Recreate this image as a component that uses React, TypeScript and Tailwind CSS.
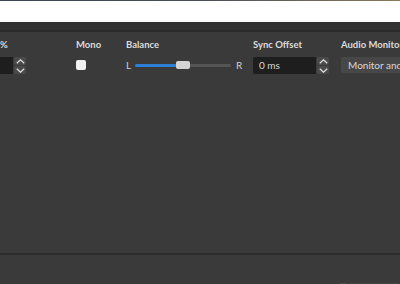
function Spin({ value, width }: { value: string; width: string }) {
    return (
        <div className="flex h-[17px] items-stretch gap-[1px]">
            <div className={`${width} flex items-center bg-[#1e1e1e] pl-[6px] text-[10px] text-[#d8d8d8] rounded-l-[2px]`}>{value}</div>
            <div className="flex w-[12px] flex-col gap-[1px]">
                <div className="flex flex-1 items-center justify-center rounded-[2px] bg-[#4a4a4a]">
                    <svg width="9" height="5" viewBox="0 0 9 5" fill="none" stroke="#e0e0e0" strokeWidth="1.2">
                        <path d="M0.8 4.3 L4.5 0.8 L8.2 4.3" />
                    </svg>
                </div>
                <div className="flex flex-1 items-center justify-center rounded-[2px] bg-[#4a4a4a]">
                    <svg width="9" height="5" viewBox="0 0 9 5" fill="none" stroke="#e0e0e0" strokeWidth="1.2">
                        <path d="M0.8 0.7 L4.5 4.2 L8.2 0.7" />
                    </svg>
                </div>
            </div>
        </div>
    );
}

export default function App() {
    return (
        <div className="flex h-[284px] w-[400px] flex-col overflow-hidden bg-[#3a3a3a]" style={{ fontFamily: 'Lato, "Open Sans", sans-serif' }}>
            {/* top strip */}
            <div className="h-[1px] bg-gradient-to-r from-[#3d4350] via-[#4a4f58] to-[#8a7a5a]" />
            <div className="h-[21px] bg-white" />
            <div className="h-[8px] bg-[#323232]" />
            <div className="h-[2px] bg-[#2a2a2a]" />

            {/* mixer row */}
            <div className="flex h-[221px] pt-[4px]">
                <div className="ml-[-40px] flex w-[66px] shrink-0 flex-col">
                    <div className="h-[18px] pl-[40px] text-[9.5px] font-bold leading-[18px] text-[#dcdcdc]">%</div>
                    <div className="mt-[3px]">
                        <Spin value="" width="w-[53px]" />
                    </div>
                </div>
                <div className="ml-[50px] flex w-[50px] shrink-0 flex-col">
                    <div className="h-[18px] text-[9.5px] font-bold leading-[18px] text-[#dcdcdc]">Mono</div>
                    <div className="mt-[6px] h-[10px] w-[10px] rounded-[2px] bg-[#f2f2f2]" />
                </div>
                <div className="flex w-[127px] shrink-0 flex-col">
                    <div className="h-[18px] text-[9.5px] font-bold leading-[18px] text-[#dcdcdc]">Balance</div>
                    <div className="mt-[3px] flex h-[17px] items-center text-[10px] text-[#cfcfcf]">
                        <span className="w-[9px]">L</span>
                        <div className="relative flex h-[3px] w-[96px] items-center">
                            <div className="h-[3px] w-[42px] rounded-l-full bg-[#2c7fd4]" />
                            <div className="h-[3px] flex-1 rounded-r-full bg-[#555555]" />
                            <div className="absolute left-[41px] top-[-3px] h-[8px] w-[14px] rounded-[2px] bg-[#d4d4d4]" />
                        </div>
                        <span className="ml-[5px]">R</span>
                    </div>
                </div>
                <div className="flex w-[88px] shrink-0 flex-col">
                    <div className="h-[18px] text-[9.5px] font-bold leading-[18px] text-[#dcdcdc]">Sync Offset</div>
                    <div className="mt-[3px]">
                        <Spin value="0 ms" width="w-[63px]" />
                    </div>
                </div>
                <div className="flex shrink-0 flex-col">
                    <div className="h-[18px] whitespace-nowrap text-[9.5px] font-bold leading-[18px] text-[#dcdcdc]">Audio Monitoring</div>
                    <div className="mt-[3px] flex h-[16px] w-[120px] items-center rounded-[2px] bg-[#474747] pl-[7px] text-[10px] whitespace-nowrap text-[#d8d8d8]">
                        Monitor and Output
                    </div>
                </div>
            </div>

            <div className="h-[2px] bg-[#2b2b2b]" />
            <div className="flex flex-1 items-end justify-end">
                <div className="mr-[2px] flex h-[1px] gap-[2px]">
                    <div className="w-[7px] bg-[#4e4e4e]" />
                    <div className="w-[49px] bg-[#454545]" />
                </div>
            </div>
        </div>
    );
}
